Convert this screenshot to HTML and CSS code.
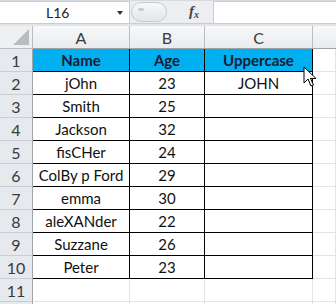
FILE: index.html
```html
<!DOCTYPE html>
<html>
<head>
<meta charset="utf-8">
<link rel="stylesheet" href="styles.css">
</head>
<body>
<div class="app">
  <div class="fbar">
    <div class="namebox"><span class="ref">L16</span><span class="dd"></span></div>
    <div class="mid">
      <div class="pill"><span class="dot"></span></div>
      <span class="fx">f<sub>x</sub></span>
    </div>
    <div class="input"></div>
  </div>
  <div class="gap"></div>
  <div class="grid">
    <div class="corner"><svg width="16" height="16" viewBox="0 0 16 16"><polygon points="16,0 16,16 0,16" fill="#b8bcc2"/></svg></div>
    <div class="ch">A</div><div class="ch">B</div><div class="ch">C</div><div class="ch last"></div>

    <div class="rh">1</div><div class="c hd">Name</div><div class="c hd">Age</div><div class="c hd">Uppercase</div><div class="e"></div>
    <div class="rh">2</div><div class="c">jOhn</div><div class="c">23</div><div class="c">JOHN</div><div class="e"></div>
    <div class="rh">3</div><div class="c">Smith</div><div class="c">25</div><div class="c"></div><div class="e"></div>
    <div class="rh">4</div><div class="c">Jackson</div><div class="c">32</div><div class="c"></div><div class="e"></div>
    <div class="rh">5</div><div class="c">fisCHer</div><div class="c">24</div><div class="c"></div><div class="e"></div>
    <div class="rh">6</div><div class="c">ColBy p Ford</div><div class="c">29</div><div class="c"></div><div class="e"></div>
    <div class="rh">7</div><div class="c">emma</div><div class="c">30</div><div class="c"></div><div class="e"></div>
    <div class="rh">8</div><div class="c">aleXANder</div><div class="c">22</div><div class="c"></div><div class="e"></div>
    <div class="rh">9</div><div class="c">Suzzane</div><div class="c">26</div><div class="c"></div><div class="e"></div>
    <div class="rh">10</div><div class="c">Peter</div><div class="c">23</div><div class="c"></div><div class="e"></div>
    <div class="rh">11</div><div class="e"></div><div class="e"></div><div class="e"></div><div class="e"></div>
    <div class="rh"></div><div class="e"></div><div class="e"></div><div class="e"></div><div class="e"></div>
  </div>
  <svg class="cursor" width="14" height="22" viewBox="0 0 14 22"><path d="M1 1 L1 17 L5 13 L8 20 L10.5 19 L7.5 12.5 L13 12.5 Z" fill="#fff" stroke="#000" stroke-width="1" stroke-linejoin="round"/></svg>
</div>
</body>
</html>
```
FILE: styles.css
```css
* { box-sizing: border-box; }
html, body { margin: 0; padding: 0; background: #fff; }
.app {
  position: relative;
  width: 336px;
  height: 304px;
  overflow: hidden;
  font-family: Lato, "Open Sans", sans-serif;
}
.fbar {
  display: flex;
  height: 24px;
  background: #eceef1;
  border-top: 1px solid #d6d9de;
}
.namebox {
  width: 130px;
  background: #fff;
  border: 1px solid #c9cdd3;
  border-left: none;
  position: relative;
  display: flex;
  align-items: center;
}
.ref {
  font-size: 14px;
  color: #222;
  margin-left: 46px;
}
.dd {
  position: absolute;
  left: 117px;
  top: 9px;
  width: 0; height: 0;
  border-left: 3.5px solid transparent;
  border-right: 3.5px solid transparent;
  border-top: 4px solid #333;
}
.mid {
  width: 83px;
  display: flex;
  align-items: center;
  position: relative;
  border-bottom: 1px solid #c9cdd3;
}
.pill {
  position: absolute;
  left: 1px;
  top: 1px;
  width: 36px;
  height: 20px;
  border-radius: 10px;
  background: linear-gradient(#f6f7f8, #e4e6ea);
  border: 1px solid #c6cad0;
}
.dot {
  position: absolute;
  left: 6px; top: 5px;
  width: 6px; height: 3px;
  border-radius: 2px;
  background: #c9ccd1;
}
.fx {
  position: absolute;
  left: 59px;
  top: 2px;
  font-family: "Liberation Serif", serif;
  font-style: italic;
  font-weight: bold;
  font-size: 15px;
  color: #444;
}
.fx sub { font-size: 10px; vertical-align: -2px; }
.input {
  flex: 1;
  background: #fff;
  border: 1px solid #c9cdd3;
  border-right: none;
}
.gap {
  height: 2px;
  background: #e2e4e8;
}
.grid {
  display: grid;
  grid-template-columns: 33px 97px 75px 108px 23px;
  grid-template-rows: 23px;
  grid-auto-rows: 23px;
}
.corner {
  background: #eef0f2;
  border-right: 1px solid #b9bdc3;
  border-bottom: 1px solid #b9bdc3;
  display: flex;
  align-items: flex-end;
  justify-content: flex-end;
  padding: 0 3px 3px 0;
}
.ch {
  background: linear-gradient(#f8f9fa, #e9ebee);
  border-right: 1px solid #babec4;
  border-bottom: 1px solid #9ea3aa;
  display: flex;
  align-items: center;
  justify-content: center;
  font-size: 16px;
  color: #3a3a3a;
}
.ch.last { border-right: none; }
.rh {
  background: #e6e9ee;
  border-right: 1px solid #9ea3aa;
  border-bottom: 1px solid #c9ced5;
  display: flex;
  align-items: center;
  justify-content: center;
  font-size: 16px;
  color: #3a3a3a;
}
.c {
  border-right: 1px solid #000;
  border-bottom: 1px solid #000;
  display: flex;
  align-items: center;
  justify-content: center;
  font-size: 15px;
  color: #111;
}
.c.hd {
  background: #00b0f0;
  font-weight: bold;
  color: #1a1a33;
}
.e {
  border-right: 1px solid #e4e4e4;
  border-bottom: 1px solid #e4e4e4;
}
.cursor {
  position: absolute;
  left: 303px;
  top: 66px;
}
```
